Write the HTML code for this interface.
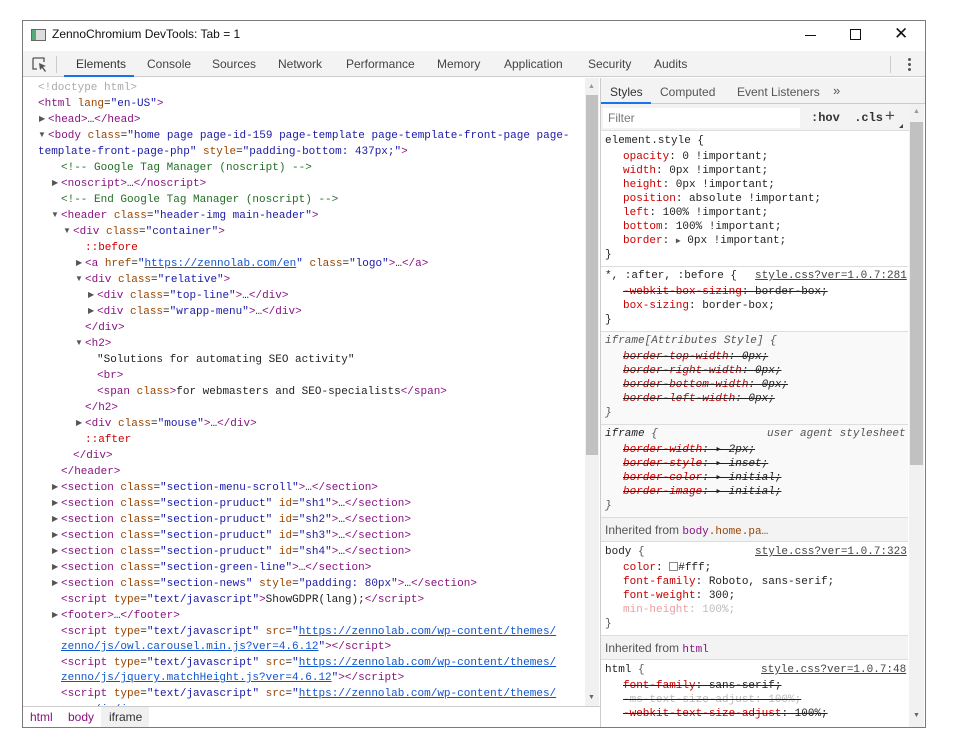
<!DOCTYPE html>
<html><head><meta charset="utf-8"><style>
*{margin:0;padding:0;box-sizing:border-box}
body{width:955px;height:751px;background:#fff;position:relative;overflow:hidden;font-family:"Liberation Sans",sans-serif}
.win{position:absolute;left:22px;top:20px;width:904px;height:708px;border:1px solid #7a7a7a;background:#fff}
.abs{position:absolute}
.mono,.ln,.rl{font-family:"Liberation Mono",monospace;font-size:11px;white-space:pre}
.ln{position:absolute;height:16px;line-height:16px;color:#222}
.rl{position:absolute;left:605px;height:14px;line-height:14px;color:#222}
.t{color:#881280}.a{color:#994500}.v{color:#1a1aa6}.l{color:#1155cc;text-decoration:underline}.ln.c,.c{color:#236e25}.p{color:#c80000}
.tri{position:absolute;font-size:8px;color:#555;line-height:16px}
.tab{position:absolute;top:57px;font-size:12px;color:#444}
.s{text-decoration:line-through;text-decoration-color:#222}
.it{font-style:italic}
.sec{position:absolute;left:601px;width:307px;border-top:1px solid #ddd}
</style></head><body>
<div class="win"></div>
<!-- title bar -->
<div class="abs" style="left:31px;top:29px;width:15px;height:12px;border:1px solid #666;background:linear-gradient(90deg,#5a7 0 4px,#ddd 4px)"></div>
<div class="abs" style="left:52px;top:27px;font-size:12px;color:#111">ZennoChromium DevTools: Tab = 1</div>
<div class="abs" style="left:805px;top:35px;width:11px;height:1px;background:#111"></div>
<div class="abs" style="left:850px;top:29px;width:11px;height:11px;border:1px solid #111"></div>
<div class="abs" style="left:894px;top:24px;font-size:17px;color:#111">✕</div>
<!-- toolbar -->
<div class="abs" style="left:23px;top:51px;width:902px;height:26px;background:#f3f3f3;border-bottom:1px solid #ccc"></div>
<svg class="abs" style="left:32px;top:57px" width="16" height="16"><path d="M1 1h11v4M1 1v11h4" fill="none" stroke="#555" stroke-width="1.3"/><path d="M7 6l7 3-3 1 3 4-1 1-3-4-2 2z" fill="#555"/></svg>
<div class="abs" style="left:56px;top:56px;width:1px;height:17px;background:#ccc"></div>
<div class="tab" style="left:76px;color:#333">Elements</div>
<div class="abs" style="left:64px;top:75px;width:70px;height:2px;background:#1a73e8"></div>
<div class="tab" style="left:147px">Console</div>
<div class="tab" style="left:212px">Sources</div>
<div class="tab" style="left:278px">Network</div>
<div class="tab" style="left:346px">Performance</div>
<div class="tab" style="left:437px">Memory</div>
<div class="tab" style="left:504px">Application</div>
<div class="tab" style="left:588px">Security</div>
<div class="tab" style="left:654px">Audits</div>
<div class="abs" style="left:890px;top:56px;width:1px;height:17px;background:#ccc"></div>
<div class="abs" style="left:908px;top:58px;width:3px;height:3px;background:#555;border-radius:2px;box-shadow:0 5px 0 #555,0 10px 0 #555"></div>
<!-- left pane -->
<div class="ln" style="top:80px;left:38px;color:#aaa">&lt;!doctype html&gt;</div>
<div class="ln" style="top:96px;left:38px"><span class="t">&lt;html</span> <span class="a">lang</span>=<span class="v">"en-US"</span><span class="t">&gt;</span></div>
<div class="tri" style="top:111px;left:39px">▶</div><div class="ln" style="top:112px;left:48px"><span class="t">&lt;head&gt;</span>…<span class="t">&lt;/head&gt;</span></div>
<div class="tri" style="top:127px;left:38px">▼</div><div class="ln" style="top:128px;left:48px"><span class="t">&lt;body</span> <span class="a">class</span>=<span class="v">"home page page-id-159 page-template page-template-front-page page-</span></div>
<div class="ln" style="top:144px;left:38px"><span class="v">template-front-page-php"</span> <span class="a">style</span>=<span class="v">"padding-bottom: 437px;"</span><span class="t">&gt;</span></div>
<div class="ln c" style="top:160px;left:61px">&lt;!-- Google Tag Manager (noscript) --&gt;</div>
<div class="tri" style="top:175px;left:52px">▶</div><div class="ln" style="top:176px;left:61px"><span class="t">&lt;noscript&gt;</span>…<span class="t">&lt;/noscript&gt;</span></div>
<div class="ln c" style="top:192px;left:61px">&lt;!-- End Google Tag Manager (noscript) --&gt;</div>
<div class="tri" style="top:207px;left:51px">▼</div><div class="ln" style="top:208px;left:61px"><span class="t">&lt;header</span> <span class="a">class</span>=<span class="v">"header-img main-header"</span><span class="t">&gt;</span></div>
<div class="tri" style="top:223px;left:63px">▼</div><div class="ln" style="top:224px;left:73px"><span class="t">&lt;div</span> <span class="a">class</span>=<span class="v">"container"</span><span class="t">&gt;</span></div>
<div class="ln" style="top:240px;left:85px;color:#c80000">::before</div>
<div class="tri" style="top:255px;left:76px">▶</div><div class="ln" style="top:256px;left:85px"><span class="t">&lt;a</span> <span class="a">href</span>=<span class="v">"</span><span class="l">https://zennolab.com/en</span><span class="v">"</span> <span class="a">class</span>=<span class="v">"logo"</span><span class="t">&gt;</span>…<span class="t">&lt;/a&gt;</span></div>
<div class="tri" style="top:271px;left:75px">▼</div><div class="ln" style="top:272px;left:85px"><span class="t">&lt;div</span> <span class="a">class</span>=<span class="v">"relative"</span><span class="t">&gt;</span></div>
<div class="tri" style="top:287px;left:88px">▶</div><div class="ln" style="top:288px;left:97px"><span class="t">&lt;div</span> <span class="a">class</span>=<span class="v">"top-line"</span><span class="t">&gt;</span>…<span class="t">&lt;/div&gt;</span></div>
<div class="tri" style="top:303px;left:88px">▶</div><div class="ln" style="top:304px;left:97px"><span class="t">&lt;div</span> <span class="a">class</span>=<span class="v">"wrapp-menu"</span><span class="t">&gt;</span>…<span class="t">&lt;/div&gt;</span></div>
<div class="ln" style="top:320px;left:85px"><span class="t">&lt;/div&gt;</span></div>
<div class="tri" style="top:335px;left:75px">▼</div><div class="ln" style="top:336px;left:85px"><span class="t">&lt;h2&gt;</span></div>
<div class="ln" style="top:352px;left:97px">"Solutions for automating SEO activity"</div>
<div class="ln" style="top:368px;left:97px"><span class="t">&lt;br&gt;</span></div>
<div class="ln" style="top:384px;left:97px"><span class="t">&lt;span</span> <span class="a">class</span><span class="t">&gt;</span>for webmasters and SEO-specialists<span class="t">&lt;/span&gt;</span></div>
<div class="ln" style="top:400px;left:85px"><span class="t">&lt;/h2&gt;</span></div>
<div class="tri" style="top:415px;left:76px">▶</div><div class="ln" style="top:416px;left:85px"><span class="t">&lt;div</span> <span class="a">class</span>=<span class="v">"mouse"</span><span class="t">&gt;</span>…<span class="t">&lt;/div&gt;</span></div>
<div class="ln" style="top:432px;left:85px;color:#c80000">::after</div>
<div class="ln" style="top:448px;left:73px"><span class="t">&lt;/div&gt;</span></div>
<div class="ln" style="top:464px;left:61px"><span class="t">&lt;/header&gt;</span></div>
<div class="tri" style="top:479px;left:52px">▶</div><div class="ln" style="top:480px;left:61px"><span class="t">&lt;section</span> <span class="a">class</span>=<span class="v">"section-menu-scroll"</span><span class="t">&gt;</span>…<span class="t">&lt;/section&gt;</span></div>
<div class="tri" style="top:495px;left:52px">▶</div><div class="ln" style="top:496px;left:61px"><span class="t">&lt;section</span> <span class="a">class</span>=<span class="v">"section-pruduct"</span> <span class="a">id</span>=<span class="v">"sh1"</span><span class="t">&gt;</span>…<span class="t">&lt;/section&gt;</span></div>
<div class="tri" style="top:511px;left:52px">▶</div><div class="ln" style="top:512px;left:61px"><span class="t">&lt;section</span> <span class="a">class</span>=<span class="v">"section-pruduct"</span> <span class="a">id</span>=<span class="v">"sh2"</span><span class="t">&gt;</span>…<span class="t">&lt;/section&gt;</span></div>
<div class="tri" style="top:527px;left:52px">▶</div><div class="ln" style="top:528px;left:61px"><span class="t">&lt;section</span> <span class="a">class</span>=<span class="v">"section-pruduct"</span> <span class="a">id</span>=<span class="v">"sh3"</span><span class="t">&gt;</span>…<span class="t">&lt;/section&gt;</span></div>
<div class="tri" style="top:543px;left:52px">▶</div><div class="ln" style="top:544px;left:61px"><span class="t">&lt;section</span> <span class="a">class</span>=<span class="v">"section-pruduct"</span> <span class="a">id</span>=<span class="v">"sh4"</span><span class="t">&gt;</span>…<span class="t">&lt;/section&gt;</span></div>
<div class="tri" style="top:559px;left:52px">▶</div><div class="ln" style="top:560px;left:61px"><span class="t">&lt;section</span> <span class="a">class</span>=<span class="v">"section-green-line"</span><span class="t">&gt;</span>…<span class="t">&lt;/section&gt;</span></div>
<div class="tri" style="top:575px;left:52px">▶</div><div class="ln" style="top:576px;left:61px"><span class="t">&lt;section</span> <span class="a">class</span>=<span class="v">"section-news"</span> <span class="a">style</span>=<span class="v">"padding: 80px"</span><span class="t">&gt;</span>…<span class="t">&lt;/section&gt;</span></div>
<div class="ln" style="top:592px;left:61px"><span class="t">&lt;script</span> <span class="a">type</span>=<span class="v">"text/javascript"</span><span class="t">&gt;</span>ShowGDPR(lang);<span class="t">&lt;/script&gt;</span></div>
<div class="tri" style="top:607px;left:52px">▶</div><div class="ln" style="top:608px;left:61px"><span class="t">&lt;footer&gt;</span>…<span class="t">&lt;/footer&gt;</span></div>
<div class="ln" style="top:624px;left:61px"><span class="t">&lt;script</span> <span class="a">type</span>=<span class="v">"text/javascript"</span> <span class="a">src</span>=<span class="v">"</span><span class="l">https://zennolab.com/wp-content/themes/</span></div>
<div class="ln" style="top:639px;left:61px"><span class="l">zenno/js/owl.carousel.min.js?ver=4.6.12</span><span class="v">"</span><span class="t">&gt;&lt;/script&gt;</span></div>
<div class="ln" style="top:655px;left:61px"><span class="t">&lt;script</span> <span class="a">type</span>=<span class="v">"text/javascript"</span> <span class="a">src</span>=<span class="v">"</span><span class="l">https://zennolab.com/wp-content/themes/</span></div>
<div class="ln" style="top:670px;left:61px"><span class="l">zenno/js/jquery.matchHeight.js?ver=4.6.12</span><span class="v">"</span><span class="t">&gt;&lt;/script&gt;</span></div>
<div class="ln" style="top:686px;left:61px"><span class="t">&lt;script</span> <span class="a">type</span>=<span class="v">"text/javascript"</span> <span class="a">src</span>=<span class="v">"</span><span class="l">https://zennolab.com/wp-content/themes/</span></div>
<div class="ln" style="top:702px;left:61px"><span class="l">zenno/js/jquery...</span></div>
<!-- left scrollbar -->
<div class="abs" style="left:585px;top:78px;width:14px;height:628px;background:#f1f1f1"></div>
<div class="abs" style="left:588px;top:83px;font-size:7px;color:#999">▲</div>
<div class="abs" style="left:586px;top:95px;width:12px;height:360px;background:#c1c1c1"></div>
<div class="abs" style="left:588px;top:694px;font-size:7px;color:#666">▼</div>
<!-- breadcrumbs -->
<div class="abs" style="left:23px;top:706px;width:577px;height:21px;background:#fff;border-top:1px solid #ccc"></div>
<div class="abs" style="left:101px;top:707px;width:48px;height:20px;background:#f0f0f0"></div>
<div class="abs" style="left:30px;top:710px;font-size:12px;color:#881280">html</div>
<div class="abs" style="left:68px;top:710px;font-size:12px;color:#881280">body</div>
<div class="abs" style="left:109px;top:710px;font-size:12px;color:#333">iframe</div>
<!-- divider -->
<div class="abs" style="left:600px;top:78px;width:1px;height:649px;background:#ccc"></div>
<!-- right pane -->
<div class="abs" style="left:601px;top:78px;width:324px;height:26px;background:#f3f3f3;border-bottom:1px solid #ccc"></div>
<div class="abs" style="left:610px;top:85px;font-size:12px;color:#333">Styles</div>
<div class="abs" style="left:601px;top:102px;width:50px;height:2px;background:#1a73e8"></div>
<div class="abs" style="left:660px;top:85px;font-size:12px;color:#555">Computed</div>
<div class="abs" style="left:737px;top:85px;font-size:12px;color:#555">Event Listeners</div>
<div class="abs" style="left:833px;top:83px;font-size:13px;color:#555">»</div>
<div class="abs" style="left:601px;top:104px;width:308px;height:27px;background:#f3f3f3;border-bottom:1px solid #ddd"></div>
<div class="abs" style="left:603px;top:108px;width:197px;height:20px;background:#fff"></div>
<div class="abs" style="left:608px;top:111px;font-size:12px;color:#777">Filter</div>
<div class="abs mono" style="left:811px;top:111px;font-size:12px;color:#333;font-weight:bold">:hov  .cls</div>
<div class="abs" style="left:885px;top:106px;font-size:17px;color:#444">+</div>
<div class="abs" style="left:899px;top:124px;width:0;height:0;border-left:4px solid transparent;border-bottom:4px solid #444"></div>
<!-- right scrollbar -->
<div class="abs" style="left:909px;top:104px;width:15px;height:623px;background:#f1f1f1"></div>
<div class="abs" style="left:913px;top:108px;font-size:7px;color:#999">▲</div>
<div class="abs" style="left:910px;top:122px;width:13px;height:343px;background:#c1c1c1"></div>
<div class="abs" style="left:913px;top:712px;font-size:7px;color:#666">▼</div>
<div class="sec" style="top:131px;height:136px;border-top:none"></div>
<div class="rl" style="top:134px">element.style {</div>
<div class="rl" style="top:150px;left:623px"><span class="p">opacity</span>: 0 !important;</div>
<div class="rl" style="top:164px;left:623px"><span class="p">width</span>: 0px !important;</div>
<div class="rl" style="top:178px;left:623px"><span class="p">height</span>: 0px !important;</div>
<div class="rl" style="top:192px;left:623px"><span class="p">position</span>: absolute !important;</div>
<div class="rl" style="top:206px;left:623px"><span class="p">left</span>: 100% !important;</div>
<div class="rl" style="top:220px;left:623px"><span class="p">bottom</span>: 100% !important;</div>
<div class="rl" style="top:234px;left:623px"><span class="p">border</span>: <span style="font-size:8px;color:#555">▶</span> 0px !important;</div>
<div class="rl" style="top:248px">}</div>
<div class="sec" style="top:266px;height:66px"></div>
<div class="rl" style="top:269px">*, :after, :before {</div>
<div class="rl" style="top:269px;left:755px;text-decoration:underline;color:#444">style.css?ver=1.0.7:281</div>
<div class="rl s" style="top:285px;left:623px"><span class="p">-webkit-box-sizing</span>: border-box;</div>
<div class="rl" style="top:299px;left:623px"><span class="p">box-sizing</span>: border-box;</div>
<div class="rl" style="top:313px">}</div>
<div class="sec" style="top:331px;height:93px;background:#f9f9f9"></div>
<div class="rl it" style="top:334px;color:#555">iframe[Attributes Style] {</div>
<div class="rl s it" style="top:350px;left:623px"><span class="p">border-top-width</span>: 0px;</div>
<div class="rl s it" style="top:364px;left:623px"><span class="p">border-right-width</span>: 0px;</div>
<div class="rl s it" style="top:378px;left:623px"><span class="p">border-bottom-width</span>: 0px;</div>
<div class="rl s it" style="top:392px;left:623px"><span class="p">border-left-width</span>: 0px;</div>
<div class="rl it" style="top:406px;color:#555">}</div>
<div class="sec" style="top:424px;height:93px;background:#f9f9f9"></div>
<div class="rl it" style="top:427px">iframe <span style="color:#555">{</span></div>
<div class="rl it" style="top:427px;left:767px;color:#555">user agent stylesheet</div>
<div class="rl s it" style="top:443px;left:623px"><span class="p">border-width</span>: ▸ 2px;</div>
<div class="rl s it" style="top:457px;left:623px"><span class="p">border-style</span>: ▸ inset;</div>
<div class="rl s it" style="top:471px;left:623px"><span class="p">border-color</span>: ▸ initial;</div>
<div class="rl s it" style="top:485px;left:623px"><span class="p">border-image</span>: ▸ initial;</div>
<div class="rl it" style="top:499px;color:#555">}</div>
<div class="sec" style="top:517px;height:24px;background:#f3f3f3"></div>
<div class="abs" style="left:605px;top:523px;font-size:12px;color:#555">Inherited from <span class="mono" style="color:#881280">body<span style="color:#994500">.home.pa…</span></span></div>
<div class="sec" style="top:541px;height:95px"></div>
<div class="rl" style="top:545px">body <span style="color:#555">{</span></div>
<div class="rl" style="top:545px;left:755px;text-decoration:underline;color:#444">style.css?ver=1.0.7:323</div>
<div class="rl" style="top:561px;left:623px"><span class="p">color</span>: <span style="display:inline-block;width:9px;height:9px;border:1px solid #888;vertical-align:-1px"></span>#fff;</div>
<div class="rl" style="top:575px;left:623px"><span class="p">font-family</span>: Roboto, sans-serif;</div>
<div class="rl" style="top:589px;left:623px"><span class="p">font-weight</span>: 300;</div>
<div class="rl" style="top:603px;left:623px;color:#bbb"><span style="color:#e9a0a0">min-height</span>: 100%;</div>
<div class="rl" style="top:617px;color:#555">}</div>
<div class="sec" style="top:635px;height:24px;background:#f3f3f3"></div>
<div class="abs" style="left:605px;top:641px;font-size:12px;color:#555">Inherited from <span class="mono" style="color:#881280">html</span></div>
<div class="sec" style="top:659px;height:68px;overflow:hidden"></div>
<div class="rl" style="top:663px">html <span style="color:#555">{</span></div>
<div class="rl" style="top:663px;left:761px;text-decoration:underline;color:#444">style.css?ver=1.0.7:48</div>
<div class="rl s" style="top:679px;left:623px"><span class="p">font-family</span>: sans-serif;</div>
<div class="rl s" style="top:693px;left:623px;color:#bbb">-ms-text-size-adjust: 100%;</div>
<div class="rl s" style="top:707px;left:623px"><span class="p">-webkit-text-size-adjust</span>: 100%;</div>
<div class="abs" style="left:601px;top:720px;width:308px;height:7px;background:#fff"></div>
</body></html>
